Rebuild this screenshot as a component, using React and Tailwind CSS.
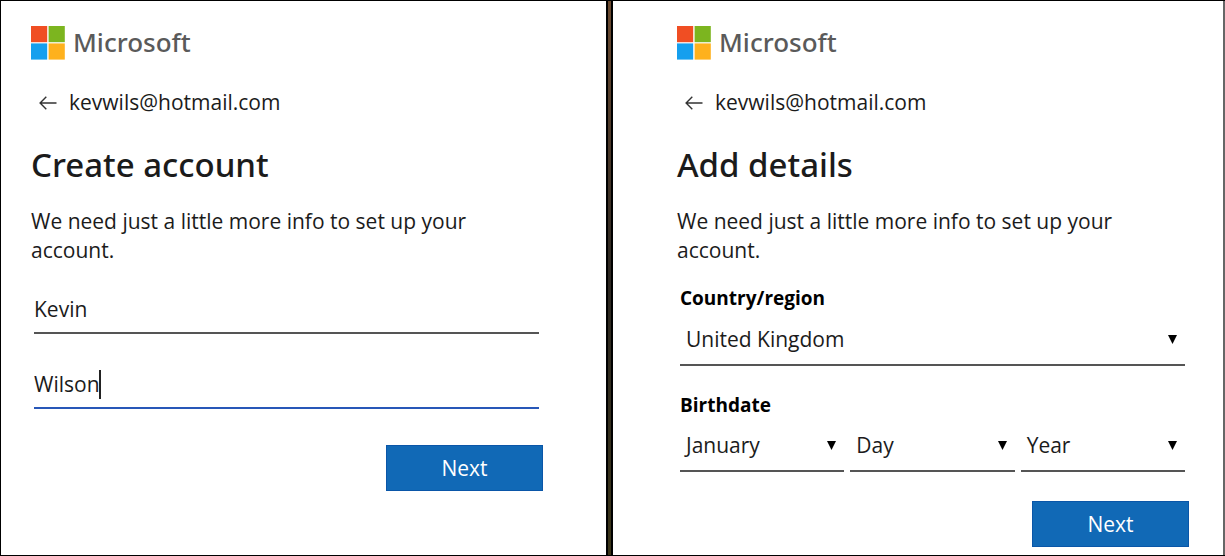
import { useState } from "react";

function Logo() {
  return (
    <div className="flex items-center gap-2">
      <svg viewBox="0 0 34 34" className="size-[34px] shrink-0" aria-hidden="true">
        <path fill="#f04e23" d="M0 0h16.2v16.2H0z" />
        <path fill="#7cb51f" d="M17.6 0h16.2v16.2H17.6z" />
        <path fill="#159fee" d="M0 17.4h16.2v16.2H0z" />
        <path fill="#feb11d" d="M17.6 17.4h16.2v16.2H17.6z" />
      </svg>
      <span className="pb-[2px] font-['Noto_Sans',sans-serif] text-[26px] leading-8 font-medium text-[#5a5a5a]">
        Microsoft
      </span>
    </div>
  );
}

function Panel({ title, children }) {
  return (
    <>
      <Logo />
      <div className="mt-7 flex h-[29px] items-center gap-3 pl-2">
        <button type="button" aria-label="Back" className="shrink-0">
          <svg viewBox="0 0 18 14" className="h-[14px] w-[18px]" fill="none" stroke="#333" strokeWidth="1.4">
            <path d="M17.5 7H1.2M7.3 .8L1.1 7l6.2 6.2" />
          </svg>
        </button>
        <span>kevwils@hotmail.com</span>
      </div>
      <h1 className="mt-7 font-['Noto_Sans',sans-serif] text-[33px] leading-10 font-medium">{title}</h1>
      <p className="mt-[22px] max-w-[460px]">We need just a little more info to set up your account.</p>
      {children}
    </>
  );
}

function NextButton() {
  return (
    <button type="submit" className="h-[46px] w-[157px] border border-[#0a56a8] bg-[#1169b6] text-white">
      Next
    </button>
  );
}

function Dropdown({ id, label, options }) {
  return (
    <div className="relative flex-1">
      <select
        id={id}
        aria-label={label}
        className="block h-[47px] w-full appearance-none border-b-2 border-[#555] bg-transparent pr-6 pb-1 indent-[6px] outline-none"
      >
        {options.map((option) => (
          <option key={option}>{option}</option>
        ))}
      </select>
      <svg viewBox="0 0 9 9" className="pointer-events-none absolute top-4 right-2 size-[9px]" aria-hidden="true">
        <path d="M0 0h9L4.5 9z" fill="#000" />
      </svg>
    </div>
  );
}

export default function App() {
  const [first, setFirst] = useState("Kevin");
  const [last, setLast] = useState("Wilson");
  const submit = (event) => event.preventDefault();

  return (
    <main className="grid min-h-screen grid-cols-[606fr_7px_612fr] border-y border-black bg-white font-['Open_Sans',sans-serif] text-[21px] leading-[29px] text-[#1b1b1b]">
      <section className="border-l border-black pt-[25px] pr-[63px] pb-2 pl-[30px]">
        <Panel title="Create account">
          <form onSubmit={submit} className="mt-[22px]">
            <div className="flex flex-col gap-7 pr-1 pl-[3px]">
              <input
                aria-label="First name"
                value={first}
                onChange={(event) => setFirst(event.target.value)}
                className="h-[47px] w-full border-b-2 border-[#555] pb-[2px] outline-none"
              />
              <div className="relative">
                <input
                  aria-label="Last name"
                  value={last}
                  onChange={(event) => setLast(event.target.value)}
                  className="block h-[47px] w-full border-b-2 border-[#2857b8] pb-[2px] caret-transparent outline-none"
                />
                <span className="absolute top-2 left-[65px] h-[29px] w-[2px] bg-[#222]" />
              </div>
            </div>
            <div className="mt-9 flex justify-end">
              <NextButton />
            </div>
          </form>
        </Panel>
      </section>
      <div className="border-x-2 border-black bg-linear-to-b from-[#6b4a30] via-[#2b2620] to-[#3a3418]" />
      <section className="border-r-2 border-[#666] pt-[25px] pr-[34px] pb-2 pl-16">
        <Panel title="Add details">
          <form onSubmit={submit} className="mt-[21px]">
            <div className="pr-1 pl-[3px]">
              <label htmlFor="country" className="block text-[19px] leading-6 font-bold text-black">
                Country/region
              </label>
              <div className="mt-[9px] flex">
                <Dropdown id="country" options={["United Kingdom"]} />
              </div>
              <label htmlFor="month" className="mt-[27px] block text-[19px] leading-6 font-bold text-black">
                Birthdate
              </label>
              <div className="mt-2 flex gap-[6px]">
                <Dropdown id="month" options={["January"]} />
                <Dropdown id="day" label="Day" options={["Day"]} />
                <Dropdown id="year" label="Year" options={["Year"]} />
              </div>
            </div>
            <div className="mt-[29px] flex justify-end">
              <NextButton />
            </div>
          </form>
        </Panel>
      </section>
    </main>
  );
}
